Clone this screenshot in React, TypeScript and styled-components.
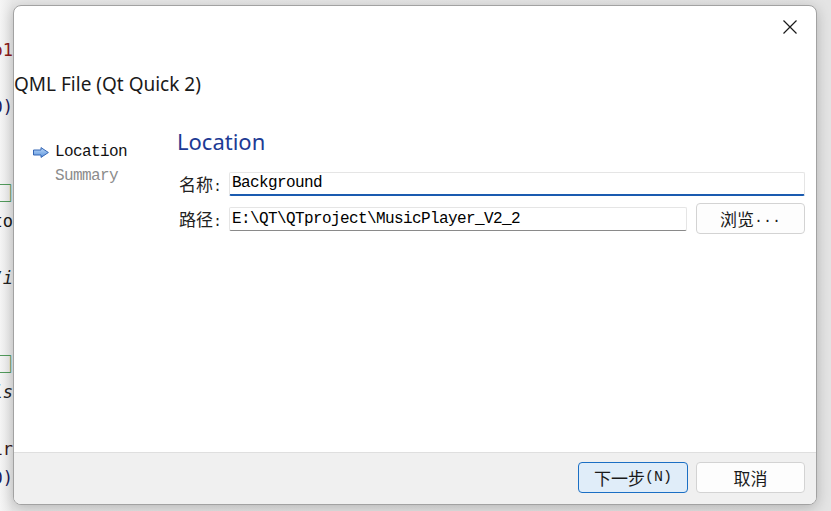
import React from "react";
import styled, { createGlobalStyle } from "styled-components";

const GlobalStyle = createGlobalStyle`
  html, body { margin: 0; padding: 0; }
  body {
    width: 831px;
    height: 511px;
    overflow: hidden;
    background: #ececec;
    font-family: "Noto Sans", "Noto Sans CJK SC", sans-serif;
  }
`;

const Page = styled.div`
  position: relative;
  width: 831px;
  height: 511px;
  overflow: hidden;
  background: linear-gradient(to right, #f3f3f3 0px, #f3f3f3 13px, #e9e9e9 13px, #e4e4e4 831px);
`;

const Editor = styled.div`
  width: 13px;
  height: 511px;
  padding-top: 36px;
  box-sizing: border-box;
  display: flex;
  flex-direction: column;
  background: linear-gradient(to right, #f5f5f5, #e8e8e8);
  overflow: hidden;
`;

const CodeLine = styled.div<{ $color: string; $italic?: boolean; $box?: boolean }>`
  height: 28.5px;
  line-height: 28.5px;
  display: flex;
  justify-content: flex-end;
  align-items: center;
  white-space: nowrap;
  overflow: hidden;
  font-family: ${(p) => (p.$box ? '"Noto Sans CJK SC", sans-serif' : '"DejaVu Sans Mono", monospace')};
  font-size: ${(p) => (p.$box ? "20px" : "17px")};
  color: ${(p) => p.$color};
  font-style: ${(p) => (p.$italic ? "italic" : "normal")};
  flex-shrink: 0;
`;

const Dialog = styled.div`
  position: absolute;
  left: 13px;
  top: 5px;
  width: 804px;
  height: 500px;
  box-sizing: border-box;
  border: 1px solid #a2a2a2;
  border-radius: 8px;
  background: #ffffff;
  overflow: hidden;
  box-shadow: 0 3px 14px rgba(0, 0, 0, 0.22);
  display: flex;
  flex-direction: column;
`;

const TitleBar = styled.div`
  height: 58px;
  flex-shrink: 0;
  display: flex;
  justify-content: flex-end;
  align-items: flex-start;
  padding: 14px 19px 0 0;
  box-sizing: border-box;
`;

const CloseIcon = styled.svg`
  width: 14px;
  height: 14px;
  display: block;
`;

const Header = styled.div`
  height: 40px;
  flex-shrink: 0;
  line-height: 40px;
  padding-left: 0;
  font-family: "Noto Sans", sans-serif;
  font-size: 19px;
  color: #1a1a1a;
`;

const Body = styled.div`
  flex: 1;
  display: flex;
  min-height: 0;
`;

const Sidebar = styled.div`
  width: 163px;
  flex-shrink: 0;
  padding: 36px 0 0 19px;
  box-sizing: border-box;
  display: flex;
  flex-direction: column;
`;

const SideItem = styled.div<{ $active?: boolean }>`
  height: 24px;
  display: flex;
  align-items: center;
  gap: 6px;
  padding-left: ${(p) => (p.$active ? "0" : "22px")};
  font-family: "Liberation Mono", monospace;
  font-size: 16px;
  letter-spacing: -0.6px;
  color: ${(p) => (p.$active ? "#111" : "#8c8c8c")};
`;

const ArrowIcon = styled.svg`
  width: 16px;
  height: 11px;
  display: block;
`;

const Main = styled.div`
  flex: 1;
  padding: 22px 11px 0 0;
  display: flex;
  flex-direction: column;
`;

const Heading = styled.h1`
  margin: 0;
  font-family: "Noto Sans", sans-serif;
  font-weight: 400;
  font-size: 22px;
  line-height: 30px;
  color: #1d3a94;
`;

const Form = styled.div`
  margin-top: 15px;
  display: grid;
  grid-template-columns: 52px 1fr;
  row-gap: 7px;
  align-items: center;
`;

const Label = styled.div`
  padding-left: 2px;
  font-family: "Liberation Mono", monospace;
  font-size: 15px;
  color: #222;
  white-space: nowrap;
`;

const Cjk = styled.span`
  font-family: "Noto Sans CJK SC", sans-serif;
  font-size: 17px;
  letter-spacing: 0;
`;

const FieldRow = styled.div`
  display: flex;
  align-items: center;
  gap: 9px;
`;

const Field = styled.div<{ $focused?: boolean }>`
  flex: 1;
  height: 24px;
  box-sizing: border-box;
  border: 1px solid #e5e5e5;
  border-bottom: ${(p) => (p.$focused ? "2px solid #1a5bb0" : "1px solid #8a8a8a")};
  border-radius: 2px;
  padding: 0 2px;
  display: flex;
  align-items: center;
  font-family: "Liberation Mono", monospace;
  font-size: 16px;
  letter-spacing: -0.6px;
  color: #000;
  white-space: nowrap;
  overflow: hidden;
  background: #fff;
`;

const Button = styled.div<{ $primary?: boolean; $width: number }>`
  width: ${(p) => p.$width}px;
  height: 31px;
  box-sizing: border-box;
  flex-shrink: 0;
  border-radius: 4px;
  border: 1px solid ${(p) => (p.$primary ? "#1b6fc4" : "#d3d3d3")};
  background: ${(p) => (p.$primary ? "#e0edf9" : "#fdfdfd")};
  display: flex;
  align-items: center;
  justify-content: center;
  font-family: "Liberation Mono", monospace;
  font-size: 15px;
  color: #1a1a1a;
  white-space: nowrap;
`;

const Footer = styled.div`
  height: 52px;
  flex-shrink: 0;
  box-sizing: border-box;
  border-top: 1px solid #dfdfdf;
  background: #f0f0f0;
  display: flex;
  justify-content: flex-end;
  align-items: flex-start;
  padding: 9px 11px 0 0;
  gap: 8px;
`;

const codeLines: { text: string; color: string; italic?: boolean; box?: boolean }[] = [
  { text: "Colo1", color: "#8b1a1a" },
  { text: "", color: "#000" },
  { text: "(0)", color: "#1a1a5a" },
  { text: "", color: "#000" },
  { text: "", color: "#000" },
  { text: "□", color: "#2e8b3a", box: true },
  { text: "auto", color: "#1a1a1a" },
  { text: "", color: "#000" },
  { text: "av/i", color: "#222", italic: true },
  { text: "", color: "#000" },
  { text: "", color: "#000" },
  { text: "□", color: "#2e8b3a", box: true },
  { text: "this", color: "#222", italic: true },
  { text: "", color: "#000" },
  { text: "Strir", color: "#3a1a1a" },
  { text: "(0)", color: "#1a1a5a" },
];

export default function App() {
  return (
    <>
      <GlobalStyle />
      <Page>
        <Editor>
          {codeLines.map((l, i) => (
            <CodeLine key={i} $color={l.color} $italic={l.italic} $box={l.box}>
              {l.text}
            </CodeLine>
          ))}
        </Editor>
        <Dialog>
          <TitleBar>
            <CloseIcon viewBox="0 0 14 14">
              <path d="M0.5 0.5 L13.5 13.5 M13.5 0.5 L0.5 13.5" stroke="#1a1a1a" strokeWidth="1.2" fill="none" />
            </CloseIcon>
          </TitleBar>
          <Header>QML File (Qt Quick 2)</Header>
          <Body>
            <Sidebar>
              <SideItem $active>
                <ArrowIcon viewBox="0 0 16 11">
                  <defs>
                    <linearGradient id="ag" x1="0" y1="0" x2="0" y2="1">
                      <stop offset="0" stopColor="#bcd8f7" />
                      <stop offset="1" stopColor="#5b94de" />
                    </linearGradient>
                  </defs>
                  <path
                    d="M0.5 3 H8 V0.6 L15.4 5.5 L8 10.4 V8 H0.5 Z"
                    fill="url(#ag)"
                    stroke="#3566b5"
                    strokeWidth="1"
                    strokeLinejoin="round"
                  />
                </ArrowIcon>
                Location
              </SideItem>
              <SideItem>Summary</SideItem>
            </Sidebar>
            <Main>
              <Heading>Location</Heading>
              <Form>
                <Label>
                  <Cjk>名称</Cjk>:
                </Label>
                <Field $focused>Background</Field>
                <Label>
                  <Cjk>路径</Cjk>:
                </Label>
                <FieldRow>
                  <Field>E:\QT\QTproject\MusicPlayer_V2_2</Field>
                  <Button $width={109}>
                    <Cjk>浏览</Cjk>...
                  </Button>
                </FieldRow>
              </Form>
            </Main>
          </Body>
          <Footer>
            <Button $primary $width={110}>
              <Cjk>下一步</Cjk>(N)
            </Button>
            <Button $width={109}>
              <Cjk>取消</Cjk>
            </Button>
          </Footer>
        </Dialog>
      </Page>
    </>
  );
}
